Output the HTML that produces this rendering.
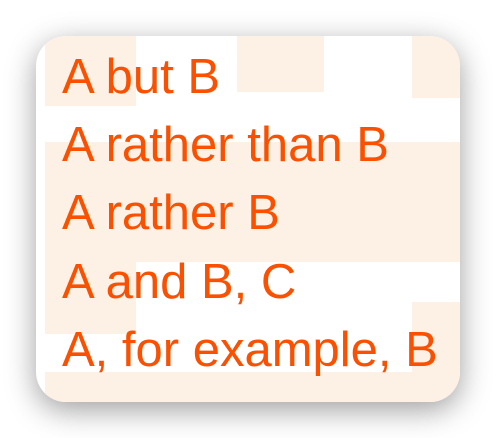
<!DOCTYPE html>
<html><head><style>
html,body{margin:0;padding:0;background:#fff;width:496px;height:438px;overflow:hidden}
.card{position:absolute;left:36px;top:36px;width:424px;height:366px;border-radius:30px;background:#fff;overflow:hidden;box-shadow:0 8px 30px rgba(0,0,0,0.38)}
.b{position:absolute;background:#fdf0e4}
.t{position:absolute;left:26px;font-family:"Liberation Sans",sans-serif;font-size:49px;color:#fa5000;white-space:nowrap;line-height:1}
</style></head><body>
<div class="card">
<div class="b" style="left:9px;top:0;width:91px;height:70px"></div>
<div class="b" style="left:201px;top:0;width:87px;height:56px"></div>
<div class="b" style="left:376px;top:0;width:48px;height:62px"></div>
<div class="b" style="left:9px;top:106px;width:415px;height:120px"></div>
<div class="b" style="left:9px;top:226px;width:91px;height:72px"></div>
<div class="b" style="left:376px;top:266px;width:48px;height:100px"></div>
<div class="b" style="left:9px;top:336px;width:415px;height:30px"></div>
<div class="t" style="top:17px">A but B</div>
<div class="t" style="top:85px">A rather than B</div>
<div class="t" style="top:153px">A rather B</div>
<div class="t" style="top:222px">A and B, C</div>
<div class="t" style="top:290px">A, for example, B</div>
</div>
</body></html>
